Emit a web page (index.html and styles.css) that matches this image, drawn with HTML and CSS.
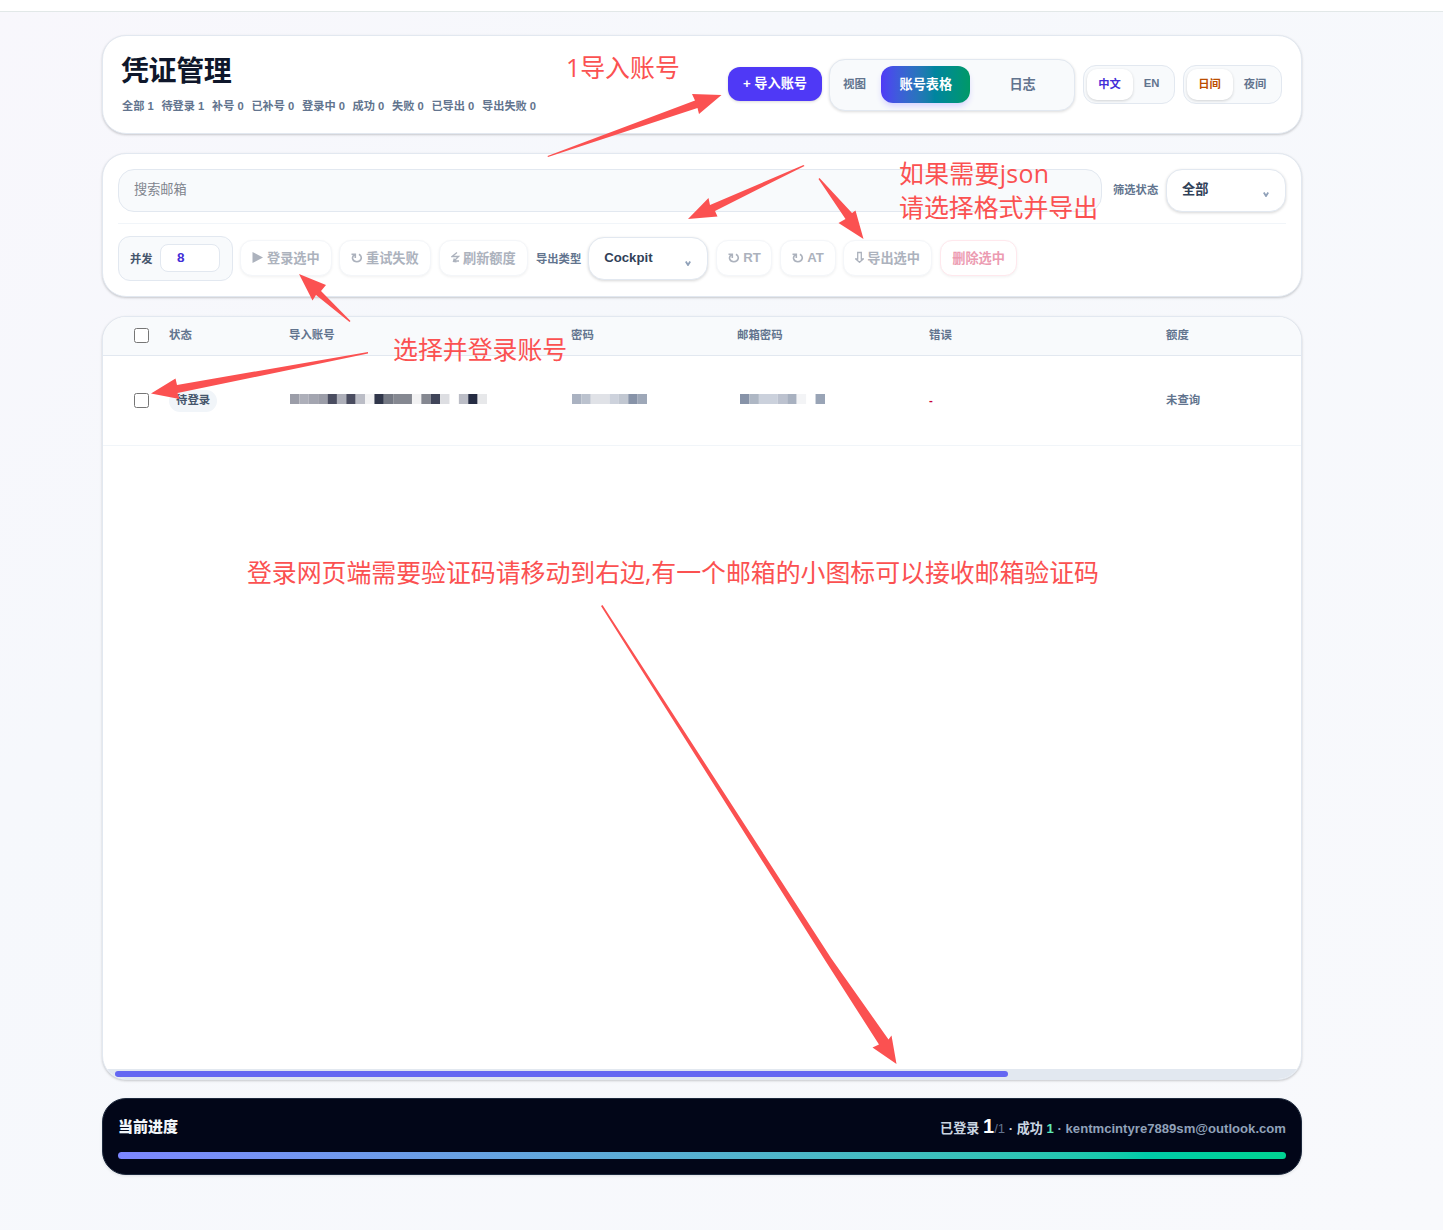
FILE: index.html
```html
<!DOCTYPE html>
<html lang="zh-CN">
<head>
  <meta charset="UTF-8">
  <meta name="viewport" content="width=device-width, initial-scale=1.0">
  <title>凭证管理</title>
  <link rel="stylesheet" href="styles.css">
</head>
<body>
  <div class="topbar"></div>

  <main class="page">
    <!-- Header -->
    <header class="card header">
      <div class="heading">
        <h1>凭证管理</h1>
        <div class="stats">
          <span>全部 1</span><span>待登录 1</span><span>补号 0</span><span>已补号 0</span><span>登录中 0</span><span>成功 0</span><span>失败 0</span><span>已导出 0</span><span>导出失败 0</span>
        </div>
      </div>
      <div class="header-actions">
        <button class="import-btn">+ 导入账号</button>
        <div class="view-tabs">
          <span class="view-label">视图</span>
          <button class="tab active">账号表格</button>
          <button class="tab">日志</button>
        </div>
        <div class="switch lang">
          <button class="on">中文</button>
          <button>EN</button>
        </div>
        <div class="switch theme">
          <button class="on">日间</button>
          <button>夜间</button>
        </div>
      </div>
    </header>

    <!-- Filters and actions -->
    <section class="card filters">
      <div class="search-row">
        <input class="search" type="text" placeholder="搜索邮箱">
        <span class="field-label">筛选状态</span>
        <div class="select"><span>全部</span><svg class="caret" width="6" height="5" viewBox="0 0 6 5"><path d="M.8.5 3 4 5.2.5"/></svg></div>
      </div>
      <div class="action-row">
        <div class="threads"><span>并发</span><div class="threads-value">8</div></div>
        <button class="action login"><svg width="12" height="12" viewBox="0 0 12 12"><path class="solid" d="M.5 1v11l10.500-5.500z"/></svg>登录选中</button>
        <button class="action retry"><svg width="12" height="11" viewBox="0 0 12 11"><path d="M.5 2.200H4.300V6M3.800 2.500C-.2 5 1.500 9.700 5.900 9.700c4.700 0 5.900-5.200 2.100-7.500"/></svg>重试失败</button>
        <button class="action quota"><svg width="9" height="12" viewBox="0 0 9 12"><path class="thin" d="M6 1.500 1 5.500h6.500L3 10h5M3.300 7.500 2.500 10.400l3 .4"/></svg>刷新额度</button>
        <span class="field-label">导出类型</span>
        <div class="select"><span>Cockpit</span><svg class="caret" width="6" height="5" viewBox="0 0 6 5"><path d="M.8.5 3 4 5.2.5"/></svg></div>
        <button class="action token"><svg width="12" height="11" viewBox="0 0 12 11"><path d="M.5 2.200H4.300V6M3.800 2.500C-.2 5 1.500 9.700 5.900 9.700c4.700 0 5.900-5.200 2.100-7.500"/></svg>RT</button>
        <button class="action token"><svg width="12" height="11" viewBox="0 0 12 11"><path d="M.5 2.200H4.300V6M3.800 2.500C-.2 5 1.500 9.700 5.900 9.700c4.700 0 5.900-5.200 2.100-7.500"/></svg>AT</button>
        <button class="action export"><svg width="9" height="12" viewBox="0 0 9 12"><path class="thin" d="M2.700 1.500h3.600v6.500h1.900l-3.700 3.300-3.700-3.300h1.900z"/></svg>导出选中</button>
        <button class="action danger">删除选中</button>
      </div>
    </section>

    <!-- Accounts -->
    <section class="card table">
      <div class="row head">
        <input type="checkbox">
        <span>状态</span><span>导入账号</span><span>密码</span><span>邮箱密码</span><span>错误</span><span>额度</span>
      </div>
      <div class="row">
        <input type="checkbox">
        <span class="state"><span class="badge">待登录</span></span>
        <svg class="mask" width="197" height="10" viewBox="0 0 21 1" preserveAspectRatio="none">
          <path stroke="#9b9da8" d="M0 .5h1M3 .5h1"/><path stroke="#adafb9" d="M1 .5h1M5 .5h1"/><path stroke="#a3a5b0" d="M2 .5h1"/>
          <path stroke="#4a4d60" d="M4 .5h1M6 .5h1"/><path stroke="#bbbdc6" d="M7 .5h1M18 .5h1"/><path stroke="#f2f2f3" d="M8 .5h1M13 .5h1"/>
          <path stroke="#30364a" d="M9 .5h1"/><path stroke="#757984" d="M10 .5h1"/><path stroke="#858891" d="M11 .5h2M14 .5h1"/>
          <path stroke="#404559" d="M15 .5h1"/><path stroke="#dddee2" d="M16 .5h1"/><path stroke="#242b42" d="M19 .5h1"/><path stroke="#e7e8ea" d="M20 .5h1"/>
        </svg>
        <svg class="mask" width="75" height="10" viewBox="0 0 8 1" preserveAspectRatio="none">
          <path stroke="#aab2c1" d="M0 .5h1"/><path stroke="#bbc2ce" d="M1 .5h1"/><path stroke="#e0e2e7" d="M2 .5h2"/><path stroke="#cdd2dc" d="M4 .5h1"/>
          <path stroke="#c1c7d1" d="M5 .5h1"/><path stroke="#8793a8" d="M6 .5h1"/><path stroke="#9ea8b8" d="M7 .5h1"/>
        </svg>
        <svg class="mask mail" width="85" height="10" viewBox="0 0 9 1" preserveAspectRatio="none">
          <path stroke="#8793a8" d="M0 .5h1"/><path stroke="#aeb7c4" d="M1 .5h1"/><path stroke="#cbd1dc" d="M2 .5h2"/><path stroke="#bcc2cf" d="M4 .5h1"/>
          <path stroke="#a8b1c0" d="M5 .5h1"/><path stroke="#f3f4f6" d="M6 .5h1"/><path stroke="#99a4b6" d="M8 .5h1"/>
        </svg>
        <span class="error">-</span>
        <span>未查询</span>
      </div>
      <div class="scrollbar"><div class="thumb"></div></div>
    </section>

    <!-- Progress -->
    <section class="progress">
      <div class="progress-info">
        <strong>当前进度</strong>
        <div class="summary">已登录 <b>1</b><i>/1</i> · 成功 <em>1</em> <span>· kentmcintyre7889sm@outlook.com</span></div>
      </div>
      <div class="progress-bar"></div>
    </section>
  </main>

  <!-- Notes drawn over the page -->
  <svg class="notes" width="1443" height="1230" viewBox="0 0 1443 1230">
    <path d="M547.500 156 695 100.500 692 94 721.500 95 699 114 697.500 108 548 157z"/>
    <path d="M803.500 165 710 205 708.500 198 688 219 717.500 216.500 715 211 804.500 166z"/>
    <path d="M819.500 178 852 213 855.500 210.500 863.500 239 838.500 223 845.500 219 818.500 179z"/>
    <path d="M350.500 321 321 291 326 285 299 274 312.500 300.500 316 295 349.500 322z"/>
    <path d="M368 352 177 385 175.500 378.500 151 393.500 179.500 399 177.500 393 368 353.500z"/>
    <path d="M602.500 605 831 958 888.500 1039.500 891.500 1035.500 896.500 1064 872.500 1047.500 879 1044.500 825.500 961 601 606z"/>
    <text x="566" y="77">1导入账号</text>
    <text x="899" y="183" textLength="150">如果需要json</text>
    <text x="899" y="217">请选择格式并导出</text>
    <text x="393" y="359">选择并登录账号</text>
    <text x="247" y="581.500" textLength="852">登录网页端需要验证码请移动到右边,有一个邮箱的小图标可以接收邮箱验证码</text>
  </svg>
</body>
</html>
```

FILE: styles.css
```css
* {
  box-sizing: border-box;
}

body {
  margin: 0;
  height: 1230px;
  overflow: hidden;
  font-family: "Liberation Sans", "Noto Sans CJK SC", sans-serif;
  font-weight: 700;
  color: #0f172b;
  background: linear-gradient(135deg, #f8f7fc 0, #f6f8fc 30%, #f8f9fc 100%);
}

button,
input {
  font: inherit;
  margin: 0;
}

button {
  border: 0;
  padding: 0;
  background: none;
  white-space: nowrap;
}

.topbar {
  height: 12px;
  background: #fff;
  border-bottom: 1px solid #e2e8e8;
}

.page {
  width: 1200px;
  margin: 23px 0 0 102px;
  display: flex;
  flex-direction: column;
}

.card {
  background: #fff;
  border: 1px solid #e2e8f0;
  border-radius: 24px;
  box-shadow: 0 1px 3px rgba(0, 0, 0, 0.1), 0 1px 2px rgba(0, 0, 0, 0.1);
}

/* header */
.header {
  height: 99px;
  padding: 0 19px;
  display: flex;
  justify-content: space-between;
}

h1 {
  margin: 17px 0 0 -1px;
  font-size: 28px;
  line-height: 38px;
  letter-spacing: -0.4px;
}

.stats {
  margin-top: 7px;
  display: flex;
  gap: 7.700px;
  font-size: 11.200px;
  line-height: 16px;
  color: #62748e;
}

.header-actions {
  display: flex;
  align-items: center;
  gap: 8px;
}

.import-btn {
  width: 94px;
  height: 34px;
  margin: 0 -1px 2px 0;
  padding-bottom: 2px;
  border-radius: 12px;
  background: #4f39f6;
  color: #fff;
  font-size: 13.200px;
  box-shadow: 0 1px 3px rgba(0, 0, 0, 0.15);
}

.view-tabs {
  width: 246px;
  height: 52px;
  padding-left: 13px;
  display: flex;
  align-items: center;
  border: 1px solid #e2e8f0;
  border-radius: 16px;
  background: #f8fafc;
  box-shadow: 0 1px 3px rgba(0, 0, 0, 0.14);
}

.view-label {
  width: 38px;
  padding-bottom: 3px;
  font-size: 11.500px;
  color: #62748e;
}

.tab {
  width: 90px;
  height: 37px;
  margin: 0 7px 0 1px;
  padding-bottom: 3px;
  border-radius: 12px;
  font-size: 13.200px;
  color: #62748e;
}

.tab.active {
  color: #fff;
  background: linear-gradient(to right in oklab, #4f39f6, #0084a0 60%, #009966);
  box-shadow: 0 4px 6px -1px #d5d1ff;
}

.switch {
  height: 39px;
  padding: 3px;
  display: flex;
  border: 1px solid #e2e8f0;
  border-radius: 13px;
  background: #f8fafc;
}

.switch button {
  flex: 1;
  padding: 0 1px 3px 0;
  font-size: 11.300px;
  color: #62748e;
}

.switch .on {
  flex: 0 0 46px;
  height: 31px;
  border-radius: 10px;
  background: #fff;
  box-shadow: 0 1px 3px rgba(0, 0, 0, 0.16);
}

.lang {
  width: 92px;
}

.switch.lang .on {
  color: #432dd7;
}

.theme {
  width: 99px;
}

.switch.theme .on {
  color: #bb4d00;
}

/* filters */
.filters {
  height: 144px;
  margin-top: 19px;
  padding: 15px 15px 0;
}

.search-row {
  height: 55px;
  display: flex;
  align-items: flex-start;
  border-bottom: 1px solid #f1f5f9;
}

.search {
  width: 984px;
  height: 43px;
  padding: 0 15px 3px;
  border: 1px solid #e2e8f0;
  border-radius: 16px;
  background: #f8fafc;
  font-size: 13.200px;
  font-weight: 400;
}

.search::placeholder {
  color: #7f848d;
}

.field-label {
  font-size: 11.300px;
  line-height: 16px;
  color: #62748e;
  white-space: nowrap;
}

.search-row .field-label {
  width: 53px;
  margin: 13px 0 0 11px;
}

.select {
  width: 120px;
  height: 43px;
  padding: 0 16px 3px 15px;
  display: flex;
  align-items: center;
  justify-content: space-between;
  border: 1px solid #e2e8f0;
  border-radius: 16px;
  background: #fff;
  box-shadow: 0 1px 3px rgba(0, 0, 0, 0.16);
  font-size: 13.200px;
  color: #314158;
}

.search-row .select {
  padding-bottom: 4px;
}

.caret {
  margin-top: 12px;
  fill: none;
  stroke: #90a1b9;
  stroke-width: 1.8;
}

.action-row {
  height: 69px;
  display: flex;
  align-items: center;
}

.threads {
  width: 115px;
  height: 45px;
  padding: 0 12px 1px 11px;
  display: flex;
  align-items: center;
  justify-content: space-between;
  border: 1px solid #e2e8f0;
  border-radius: 12px;
  background: #f8fafc;
  font-size: 11.300px;
  color: #45556c;
}

.threads-value {
  width: 60px;
  height: 28px;
  padding-left: 16px;
  border: 1px solid #e2e8f0;
  border-radius: 8px;
  background: #fff;
  font-size: 13.500px;
  line-height: 25px;
  color: #432dd7;
}

.action {
  height: 36px;
  margin: 0 0 1px 7px;
  padding: 0 0 2px 11px;
  display: flex;
  align-items: center;
  gap: 3px;
  border: 1px solid #f4f6f9;
  border-radius: 12px;
  background: #fff;
  box-shadow: 0 1px 3px rgba(0, 0, 0, 0.06);
  font-size: 13.200px;
  color: #acb2bd;
}

.action.login,
.action.retry {
  width: 92px;
}

.action.quota,
.action.export {
  width: 89px;
}

.action.quota {
  margin-left: 8px;
}

.action.token {
  width: 56px;
  margin-left: 8px;
}

.action svg {
  flex: none;
  fill: none;
  stroke: currentColor;
  stroke-width: 1.6;
}

.action .solid {
  fill: currentColor;
  stroke: none;
}

.action .thin {
  stroke-width: 1.3;
}

.action-row .field-label {
  margin: 0 7px 0 8px;
}

.action.danger {
  width: 77px;
  margin-left: 8px;
  border-color: #ffe8ed;
  color: #ec9bb1;
}

/* accounts table */
.table {
  height: 764px;
  margin-top: 19px;
  display: flex;
  flex-direction: column;
  overflow: hidden;
}

.row {
  height: 90px;
  padding-left: 31px;
  display: grid;
  grid-template-columns: 35px 120px 282px 166px 192px 237px 1fr;
  align-items: center;
  border-bottom: 1px solid #f1f5f9;
  font-size: 11.400px;
  color: #62748e;
}

.row > span {
  margin-top: -3px;
}

.row > .state {
  margin-top: 0;
}

.row.head {
  height: 39px;
  padding-bottom: 1px;
  background: #f8fafc;
  border-color: #e2e8f0;
}

.row input {
  width: 15px;
  height: 15px;
}

.badge {
  display: inline-block;
  padding: 0 7px 1px;
  border-radius: 11px;
  line-height: 21px;
  background: #f1f5f9;
  color: #45556c;
}

.mask {
  margin: -3px 0 0 1px;
}

.mask.mail {
  margin-left: 3px;
}

.row > .error {
  margin-top: -1px;
  color: #c70036;
}

.scrollbar {
  height: 11px;
  margin-top: auto;
  margin-bottom: -1px;
  padding: 2px 12px;
  background: #e2e8f0;
}

.thumb {
  width: 893px;
  height: 6px;
  border-radius: 3px;
  background: #6467f2;
}

/* progress */
.progress {
  height: 77px;
  margin-top: 18px;
  padding: 13px 15px;
  border: 1px solid #1d293d;
  border-radius: 24px;
  background: #020618;
  box-shadow: 0 1px 3px rgba(0, 0, 0, 0.1);
}

.progress-info {
  height: 40px;
  display: flex;
  justify-content: space-between;
  color: #f1f5f9;
}

.progress-info strong {
  font-size: 15px;
  line-height: 29px;
}

.summary {
  font-size: 13.120px;
  line-height: 28px;
  color: #cad5e2;
}

.summary b {
  font-size: 20px;
  color: #fff;
}

.summary i {
  font-style: normal;
  font-weight: 400;
  color: #62748e;
}

.summary em {
  font-style: normal;
  color: #5ee9b5;
}

.summary span {
  color: #90a1b9;
}

.progress-bar {
  height: 7px;
  border-radius: 4px;
  background: linear-gradient(to right in oklab, #7c86ff, #00cba8 88%, #00d492);
}

/* notes layer */
.notes {
  position: absolute;
  top: 0;
  left: 0;
  fill: #fb5151;
  pointer-events: none;
}

.notes text {
  font-family: "Open Sans", "Noto Sans CJK SC", sans-serif;
  font-size: 24.900px;
  font-weight: 400;
}
```
